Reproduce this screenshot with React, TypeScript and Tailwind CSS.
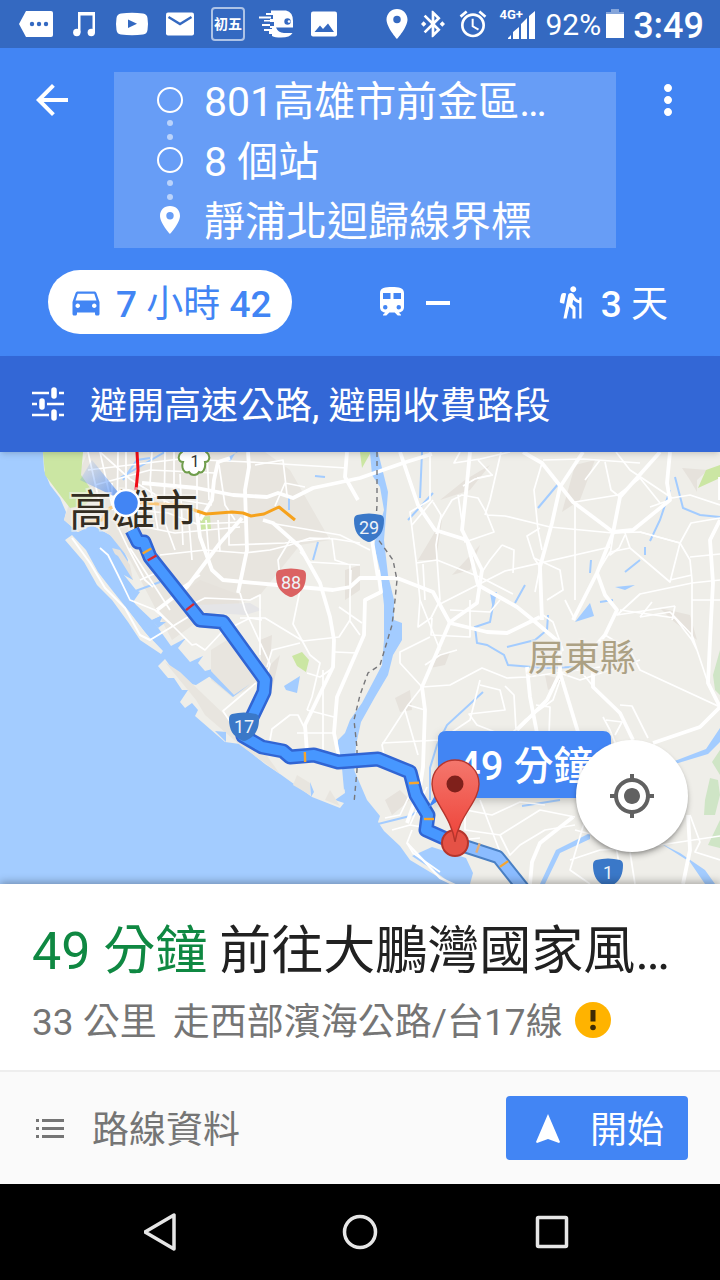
import type { ReactNode } from 'react';
import { MdAlarm, MdArrowBack, MdBluetoothConnected, MdDirectionsCar, MdHiking, MdMoreVert, MdMyLocation, MdPlace } from 'react-icons/md';

const WIDE_ROADS = [
    'M142 483L197 488L233 495L267 497L278 493L293 498L313 488L360 478L403 463L432 454',
    'M248 452L249 467L245 490L247 550L238 593',
    'M230 458L218 462L214 480L212 500L200 520',
    'M197 513L200 537L212 570L223 580L277 585L333 590L350 587L360 578L397 578L433 592L450 623L487 632L507 633L540 617',
    'M242 518L220 543L187 587L157 610',
    'M263 520L273 523L300 547L320 583L330 617L334 640L333 667L305 725L307 752',
    'M347 452L345 477L358 500',
    'M378 570L381 592L365 600L364 635L337 697L334 733L339 758',
    'M372 540L378 578',
    'M400 452L418 505L435 530L467 540L478 585L517 607L533 620L560 643L560 673L547 700L517 730',
    'M470 452L467 483L462 530L467 540L482 570L477 603L450 622L422 687L425 710L423 767L420 787L407 823',
    'M583 452L560 487L552 523L540 567L542 620',
    'M660 452L620 497L613 533L597 573L573 620',
    'M523 452L542 463L573 502L613 532L633 530L670 500L667 483L670 452',
    'M597 573L605 595L617 610L605 635L577 667',
    'M720 520L710 540L713 583L711 620L708 683L720 707L700 727L653 743',
    'M560 673L578 732',
    'M593 667L593 687L620 713L633 740',
    'M527 667L530 697L537 733',
    'M573 817L540 843L532 862L530 884',
    'M683 884L690 850L688 815',
    'M720 477L720 500',
];

const THIN_ROADS = [
    'M88 452L100 505M100 452L113 510M118 452L117 520M152 452L150 484L158 530M165 452L164 520L175 550M180 474L183 545M197 474L197 515',
    'M88 470L180 459L250 462L347 468M95 485L150 470L215 473M105 497L158 496L212 505M120 509L168 513L197 524L245 522M120 522L175 533L240 527',
    'M126 452L126 505M174 452L174 500M207 452L209 500M188 509L192 560M206 520L210 568M218 520L220 552M229 512L229 545L285 543L330 538',
    'M130 548L170 610M117 525L128 548L145 580L153 587M100 548L108 555L118 575L130 600L155 610L173 626',
    'M140 580L156 573L178 590L200 575M157 610L172 625L192 645L196 644L205 650L222 632L250 618L262 620',
    'M160 555L205 550L244 553L270 550L290 545L310 538L335 539L360 543',
    'M175 600L195 603L205 598L250 600L260 595L260 655M240 593L245 610L270 664L266 680',
    'M270 523L340 535L370 550M290 540L278 560L280 578M300 590L293 624L310 655L320 663L312 697L307 710',
    'M240 618L265 618L303 641L339 637L350 620L350 595L351 570M335 652L357 653M350 621L360 635M339 607L362 623',
    'M267 667L272 650L300 643M256 683L223 711L235 729M307 673L320 677L333 668M323 670L323 750M307 710L334 717M297 733L334 733',
    'M270 740L272 729L290 715L298 715L305 729M246 737L265 753L295 757M332 538L335 560L350 565L350 587M300 552L310 562L360 565',
    'M112 483L112 500M275 506L285 483L305 487M219 465L225 505L235 520M255 465L283 460L287 495M100 452L130 479L172 505',
    'M430 452L430 500L410 512L416 560L420 600L440 650M433 502L441 515L436 545L440 600M433 500L412 525M460 452L454 463L480 459L510 452',
    'M436 534L440 520L452 500L462 495L478 498L486 512L494 532L465 542L458 495M477 478L492 475L478 460M487 515L505 516L550 527L613 533L640 532L680 543L690 560L692 580L692 640',
    'M485 515L490 500L501 452M463 486L475 479L493 475M542 463L534 490L538 530L542 550M543 460L583 459L640 463M575 502L575 600M575 502L618 495L640 478L660 503M605 462L611 490L620 497M600 460L585 480',
    'M616 452L630 470L672 498L690 495L720 505M650 507L670 500M640 532L680 543L691 523L720 518M540 528L527 536L534 558L560 570L563 590L547 600M597 573L610 552L630 548L625 533',
    'M613 536L610 555L619 548L625 535M630 548L670 582L680 543M670 580L692 575M690 557L720 554M692 600L720 600M692 583L640 594L617 615L675 606',
    'M416 563L437 560L482 578L513 594M423 564L425 600M440 604L505 571L610 547M502 545L514 550L513 573M502 545L490 560L482 572M535 592L540 567L534 558',
    'M420 600L418 627L431 618L440 600M432 618L431 635L470 637L470 600M430 637L400 652L400 663L422 687L450 685L482 668L507 678L527 677L600 667',
    'M450 610L490 612L500 600M457 650L440 655L425 665M422 687L408 705L382 745L384 755M408 705L425 710M405 710L418 755M382 743L440 740L470 720L480 680',
    'M480 685L500 690L505 710L469 714L477 725L503 735M505 686L514 695L516 730M560 673L580 680L640 660M536 705L550 707L549 735M510 735L525 720L553 700L560 680',
    'M577 667L588 680L596 690M605 635L630 650L640 670L720 707M620 610L675 618L692 640L697 650M640 617L670 612L692 635L708 683M675 606L672 620',
    'M600 660L615 650M606 720L622 722L615 735M620 705L632 706L648 738M620 755L610 730L603 717M692 583L720 580M652 602L640 617M565 600L575 620M543 615L553 622L563 650L540 665',
    'M427 787L410 825L392 830M385 818L400 815L412 790M410 825L440 830L460 840L480 838M412 830L407 843L413 853L440 872M465 790L465 830L500 835L540 810L575 817',
    'M466 810L492 815L520 802L545 805M500 835L510 855L520 845L545 830L575 825M480 800L500 852M575 830L615 840L620 870M585 820L570 870L590 884M570 860L600 850L640 848L720 836M690 815L700 842L695 852L720 860M630 852L635 884',
];

const RIVERS = [
    'M422 452L420 498M433 493L408 520M559 483L538 508M675 477L683 508L700 515L720 517',
    'M670 490L660 520L650 541M645 547L645 555M640 560L625 572M591 560L590 573M525 585L515 603M600 602L613 600',
    'M494 600L490 622L475 627L477 643L487 645L504 655L508 665L545 668L575 667M507 647L535 640L547 630L548 615',
    'M483 692L447 725L437 745L430 768L430 800M123 480L137 460L150 458M165 452L120 478M160 582L130 593M318 542L313 560M289 498L289 510M315 476L325 477',
    'M522 806L560 800M378 824L410 816L430 803',
];

// [x, y] of the tick on the route, its rotation and its colour
const TICKS: [number, number, number, string][] = [
    [147, 551, -30, '#f5a52f'],
    [152, 558, -30, '#d9282f'],
    [190, 607, -38, '#d9282f'],
    [305, 757, 88, '#f5a52f'],
    [414, 783, -3, '#f5a52f'],
    [429, 819, 0, '#f5a52f'],
    [478, 848, -70, '#e3ad78'],
    [504, 864, -35, '#f5a52f'],
];

const STOPS = ['801高雄市前金區…', '8 個站', '靜浦北迴歸線界標'];

const Shield = ({ x, y, label, fill }: { x: number; y: number; label: string; fill: string }) => (
    <g transform={`translate(${x} ${y})`}>
        <path d="M-12 -13Q0 -16 12 -13Q15 -12 15 -8C15 3 11 9 3 13Q0 15 -3 13C-11 9 -15 3 -15 -8Q-15 -12 -12 -13Z" fill={fill} />
        <text y="6" textAnchor="middle" fill="#eef3f8" className="text-lg">{label}</text>
    </g>
);

const RouteMap = () => (
    <svg viewBox="0 452 720 432" preserveAspectRatio="xMidYMid slice" className="absolute inset-0 w-full h-full" role="img" aria-label="路線地圖">
        <defs>
            <linearGradient id="pin" x1="0" y1="0" x2="0" y2="1">
                <stop offset="0" stopColor="#f4776d" />
                <stop offset="1" stopColor="#ee4238" />
            </linearGradient>
            <linearGradient id="beam" x1="1" y1="1" x2="0" y2="0">
                <stop offset="0" stopColor="#4285f4" stopOpacity="0.8" />
                <stop offset="1" stopColor="#4285f4" stopOpacity="0" />
            </linearGradient>
            <filter id="soft" x="-20%" y="-20%" width="140%" height="150%">
                <feDropShadow dx="0" dy="3" stdDeviation="4" floodOpacity="0.2" />
            </filter>
        </defs>

        {/* land */}
        <rect y="452" width="720" height="432" fill="#a3ccff" />
        <path d="M43 452L44 470L50 485L60 498L66 512L64 520L78 532L92 525L110 535L121 545L128 560L124 575L136 590L140 592L133 602L152 620L163 615L154 622L171 646L186 638L178 648L190 662L203 656L198 663L205 671L216 668L212 675L196 685L182 682L165 659L158 666L168 678L174 678L182 690L188 690L180 702L185 708L192 703L198 710L195 716L225 742L240 744L265 764L280 774L312 797L340 808L344 803L335 800L345 793L343 768L343 735L354 735L354 770L361 786L367 800L380 816L378 822L384 831L400 846L410 860L440 878L450 884H720V452Z" fill="#efeee9" />
        <path d="M65 540L72 535L86 550L98 572L112 590L128 610L145 632L163 651L161 654L140 640L128 622L112 600L97 585L84 562Z" fill="#efeee9" />
        <path d="M88 452H265L290 470L330 540L300 545L260 595L200 620L172 640L130 560L110 535L92 525L78 532L64 520L80 470Z M211 650L235 635L260 675L256 685L232 697L211 680Z M165 662L180 672L230 720L265 753L280 774L240 745L205 715L196 700Z M297 775L310 783V795L293 785Z M330 790L340 806L325 800Z" fill="#e8e5df" />
        <path d="M100 545L120 550L130 565L133 580L125 575L112 548ZM180 594L200 580L240 595L238 610L200 612ZM260 640L272 635L270 665L280 655L272 690L262 675ZM490 465L470 490L440 500L465 480ZM575 465L595 460L580 500L562 512ZM682 468L708 470L697 480L697 492L690 480ZM418 560L442 520L436 560ZM480 545L470 570L452 575ZM434 655L450 652L445 665L430 668ZM395 698L410 690L412 710L400 712ZM660 608L690 615L697 640L672 620ZM345 570L360 565V590L345 600ZM545 675L565 680L548 690ZM385 800L400 790L410 800L392 815Z" fill="#e6e2dc" />
        <path d="M195 605L250 603L262 610L245 615L200 612Z" fill="#e5e5e7" />
        <path d="M43 452H83L81 475L95 495L85 505L70 508L60 495L45 475Z" fill="#cbe6a3" />
        <path d="M200 517L210 516L211 529L201 530ZM292 656L302 652L309 660L306 672L297 666ZM360 452H371L362 468ZM706 470L720 465V478L698 488Z" fill="#cbe6a3" />
        <path d="M720 650L713 675L715 690L720 695ZM720 750L712 762L720 775ZM710 778L718 780L720 795L715 815L704 815L705 800ZM720 820L708 845L720 848Z" fill="#cfe5c6" />

        {/* harbour, ponds and rivers */}
        <path d="M100 545L118 556L133 580L124 575ZM95 552L110 560L135 595L125 593ZM133 600L138 610L160 645L150 638L130 612ZM152 620L163 615L160 622L166 622L158 628ZM205 673L233 697L250 684L234 695L210 670ZM215 731L226 732V742ZM310 782L314 792L311 797ZM284 686L300 676L297 693L286 690ZM226 458L238 452H236L230 462ZM575 622L590 603L594 616ZM615 587L635 585L625 590ZM490 593L497 592L493 610Z" fill="#a3ccff" />
        <path d="M370 452H378L388 492L384 540L388 575L394 600V620L402 623V640L393 655L388 675L375 697L361 722L356 745L354 775L344 790L342 768L338 758V740L345 733L350 720L362 703L382 665L384 640V605L380 570L374 545L384 510L380 487L372 475Z" fill="#a3ccff" />
        <path d="M412 856L432 847L466 858L473 873L470 884H452L430 868ZM672 762L706 749L720 728V742L708 754L675 764ZM540 884L556 850L590 833V839L560 853L545 884ZM660 843L680 853L705 870L715 884H705L690 862Z" fill="#a3ccff" />
        <g fill="none" stroke="#a3ccff" strokeWidth="2">
            {RIVERS.map((d) => <path key={d} d={d} />)}
        </g>

        <g fill="none" stroke="#ffffff" strokeLinejoin="round">
            {THIN_ROADS.map((d) => <path key={d} d={d} strokeWidth="1.7" />)}
            {WIDE_ROADS.map((d) => <path key={d} d={d} strokeWidth="3.8" />)}
            <path d="M72 538L90 563L105 588L125 608L140 635L150 640L188 617" strokeWidth="2" />
            <path d="M407 843L440 878L470 892" strokeWidth="2.4" />
        </g>
        <path d="M377 452V505L375 535L393 560L397 580L395 600L392 625L380 665L368 673L360 695L354 720L357 748V770L354 803" fill="none" stroke="#77777a" strokeWidth="1.4" strokeDasharray="5 4" />

        {/* traffic */}
        <g fill="none" strokeLinejoin="round">
            <path d="M137 452L138 470L136 490" stroke="#f00d18" strokeWidth="3" />
            <path d="M85 522L102 520L110 508L126 502" stroke="#f8cf8b" strokeWidth="3" />
            <path d="M130 502L158 504L180 505L197 511" stroke="#fac779" strokeWidth="3" />
            <path d="M197 511L206 514L232 512L243 513L251 516L264 514L279 507L295 520" stroke="#f6a21c" strokeWidth="3" />
        </g>

        <path d="M126 502L80 480L92 460Z" fill="url(#beam)" />
        <text x="69" y="526" fill="#332d22" stroke="#f7f5f0" strokeWidth="4" strokeOpacity="0.6" paintOrder="stroke" className="text-[43px]">高雄市</text>
        <text x="528" y="671" fill="#aca184" stroke="#f3f1ec" strokeWidth="4" strokeOpacity="0.6" paintOrder="stroke" className="text-4xl">屏東縣</text>

        {/* route */}
        <g fill="none" strokeLinejoin="round">
            <path d="M455 843L498 857L526 892" stroke="#4a80c4" strokeWidth="14" />
            <path d="M455 843L498 857L526 892" stroke="#8bbcff" strokeWidth="10" />
            <path d="M132 530L138 542L144 542L150 557L200 620L223 622L265 680L264 692L243 736L262 747L283 751L290 757L314 755L338 762L378 759L410 772L416 795L428 815L426 830L455 843" stroke="#3165d3" strokeWidth="15" />
            <path d="M132 530L138 542L144 542L150 557L200 620L223 622L265 680L264 692L243 736L262 747L283 751L290 757L314 755L338 762L378 759L410 772L416 795L428 815L426 830L455 843" stroke="#4797ff" strokeWidth="10" />
        </g>
        {TICKS.map(([x, y, angle, color]) => (
            <path key={`${x}-${y}`} d="M-5 0H5" stroke={color} strokeWidth="2.4" transform={`translate(${x} ${y}) rotate(${angle})`} />
        ))}
        <circle cx="126" cy="503" r="13" fill="#4285f4" stroke="#ffffff" strokeWidth="2.4" />

        <path d="M194 446c4-6 13-3 12 4c5 3 4 10-1 10c1 6-2 12-6 10c-2 4-8 4-10 0c-5 2-8-4-6-10c-5 0-6-7-1-10c-1-7 8-10 12-4z" transform="translate(0 2)" fill="#ffffff" stroke="#6f9d4b" strokeWidth="2" />
        <text x="195" y="467" textAnchor="middle" fill="#333333" className="text-base">1</text>
        <Shield x={369} y={528} label="29" fill="#3a78c8" />
        <Shield x={291} y={583} label="88" fill="#db6262" />
        <Shield x={244} y={727} label="17" fill="#3a78c8" />
        <Shield x={608} y={873} label="1" fill="#3a78c8" />

        {/* callout and destination */}
        <path d="M446 731H603Q611 731 611 739V790Q611 798 603 798H442L428 808L438 790V739Q438 731 446 731Z" fill="#4285f4" filter="url(#soft)" />
        <text x="458" y="780" fill="#ffffff" className="text-[40px] font-medium">49 分鐘</text>
        <circle cx="455" cy="843" r="13" fill="#e55246" stroke="#b5352c" strokeWidth="2" />
        <path d="M455 760C442 760 432 771 432 784C432 802 451 815 455 842C459 815 479 802 479 784C479 771 469 760 455 760Z" fill="url(#pin)" stroke="#b5352c" strokeWidth="1.4" />
        <circle cx="455" cy="784" r="8.5" fill="#7f201b" />
    </svg>
);

const StatusIcon = ({ children }: { children: ReactNode }) => (
    <svg viewBox="0 0 48 48" className="w-12 h-12" fill="#ffffff" aria-hidden="true">{children}</svg>
);

const StatusBar = () => (
    <div className="h-12 bg-[#3469c1] text-white flex justify-between items-center pl-3 pr-4">
        <div className="flex items-center">
            <StatusIcon>
                <path d="M14 11H39Q41 11 41 13V35Q41 37 39 37H14L7 24Z" />
                <g fill="#3469c1"><circle cx="20" cy="24" r="2.2" /><circle cx="27" cy="24" r="2.2" /><circle cx="34" cy="24" r="2.2" /></g>
            </StatusIcon>
            <StatusIcon>
                <path d="M18 12H35V32.500H32.500V15.500H20.500V32.500H18Z" />
                <circle cx="16.800" cy="32.500" r="3.700" /><circle cx="31.300" cy="32.500" r="3.700" />
            </StatusIcon>
            <StatusIcon>
                <path d="M13 13.500Q24 12 35 13.500Q39 14 39.500 18Q40.500 24 39.500 30Q39 34 35 34.500Q24 36 13 34.500Q9 34 8.500 30Q7.500 24 8.500 18Q9 14 13 13.500Z" />
                <path d="M20 19.500V28L29 23.700Z" fill="#3469c1" />
            </StatusIcon>
            <StatusIcon>
                <rect x="10" y="12.500" width="28" height="23" rx="2" />
                <path d="M12.500 17L24 24L35.500 17" fill="none" stroke="#3469c1" strokeWidth="2.400" />
            </StatusIcon>
            <div className="w-12 flex justify-center">
                <span className="w-[34px] h-[34px] border-2 border-white/60 rounded-sm flex justify-center items-center text-[14px] leading-none font-bold">初五</span>
            </div>
            <StatusIcon>
                <path d="M19 10.500H34Q41 12 41 21V27.500H24Q26 32.500 32 33H40.500Q38 37.500 29 37.500Q23 37.500 20 36V34H17V31H20V28H18V26H22V22H18V19H21V15H14V13H19Z" />
                <path d="M7 16.500H19V18.500H7ZM12 20H19V21.500H12ZM10 24H18V26H10ZM12 29H20V31H12Z" />
                <circle cx="35.500" cy="21.500" r="3.200" fill="#3469c1" /><circle cx="37" cy="21.500" r="1.300" />
            </StatusIcon>
            <StatusIcon>
                <rect x="11" y="11.500" width="26" height="25" rx="2" />
                <path d="M14.500 32L20 25.500L23 29L28 23.500L34 32Z" fill="#3469c1" />
            </StatusIcon>
        </div>
        <div className="flex items-center">
            <MdPlace className="w-9 h-9" />
            <MdBluetoothConnected className="w-8 h-8 ml-0.5" />
            <MdAlarm className="w-8 h-8 ml-2" />
            <div className="w-12 h-12 relative">
                <span className="absolute left-2.5 top-2 text-[13px] leading-none font-bold">4G+</span>
                <svg viewBox="0 0 48 48" className="w-12 h-12" fill="#ffffff" aria-hidden="true">
                    <path d="M19 39V38L22 35V39ZM24 39V32L30 27V39ZM32 39V24L38 18V39ZM40 39V16L46 11V39Z" />
                </svg>
            </div>
            <span className="ml-2 pt-0.5 text-[30px] leading-none">92%</span>
            <svg viewBox="0 0 20 30" className="w-5 h-[30px] ml-1 mr-2" fill="#ffffff" aria-hidden="true">
                <path d="M6 0H14V3H19V6H1V3H6Z" fillOpacity="0.4" />
                <path d="M1 5H19V29H1Z" />
            </svg>
            <span className="pt-1 text-4xl leading-none font-medium">3:49</span>
        </div>
    </div>
);

const Header = () => (
    <header className="bg-[#4285f4] text-white">
        <div className="pt-6 px-7 flex justify-between items-start">
            <button type="button" aria-label="返回" className="w-12 h-14 flex justify-center items-center">
                <MdArrowBack className="w-12 h-12" />
            </button>
            <div className="grow ml-[38px] mr-7 h-44 bg-white/20 pl-8 flex gap-3">
                <svg viewBox="0 0 48 176" className="w-12 h-44 shrink-0" fill="none" aria-hidden="true">
                    <circle cx="24" cy="28" r="12" stroke="#ffffff" strokeWidth="2" />
                    <circle cx="24" cy="88" r="12" stroke="#ffffff" strokeWidth="2" />
                    <g fill="#ffffff" fillOpacity="0.55">
                        <circle cx="24" cy="51" r="3" /><circle cx="24" cy="65" r="3" />
                        <circle cx="24" cy="111" r="3" /><circle cx="24" cy="125" r="3" />
                    </g>
                    <path d="M24 134C18 134 14 138 14 144C14 151 24 162 24 162S34 151 34 144C34 138 30 134 24 134ZM24 140A3.700 3.700 0 1 1 24 147.400A3.700 3.700 0 1 1 24 140Z" fill="#ffffff" fillRule="evenodd" />
                </svg>
                <ul className="-my-0.5 -ml-0.5">
                    {STOPS.map((stop) => (
                        <li key={stop} className="h-15 pt-1 flex items-center text-[41px] leading-none whitespace-nowrap">{stop}</li>
                    ))}
                </ul>
            </div>
            <button type="button" aria-label="更多選項" className="w-12 h-14 flex justify-center items-center">
                <MdMoreVert className="w-12 h-12" />
            </button>
        </div>
        <nav className="pt-[22px] pb-[22px] pl-12 pr-8 flex justify-between text-[37px] leading-none font-medium">
            <button type="button" className="h-16 px-5 rounded-full bg-white text-[#4285f4] flex items-center gap-3">
                <MdDirectionsCar className="w-9 h-9" />
                <span className="pt-1">7 <span className="font-normal">小時</span> 42</span>
            </button>
            <button type="button" aria-label="大眾運輸" className="h-16 px-5 flex items-center gap-4">
                <svg viewBox="0 0 24 24" className="w-9 h-9" fill="currentColor" aria-hidden="true">
                    <path d="M12 2c-4.420 0-8 .5-8 4v9.500C4 17.430 5.570 19 7.500 19L6 20.500v.5h2.230l2-2H13.800l2 2H18v-.5L16.500 19c1.930 0 3.500-1.570 3.500-3.500V6c0-3.500-3.580-4-8-4zM7.500 17a1.500 1.500 0 1 1 0-3a1.500 1.500 0 0 1 0 3zM11 10H6V6h5v4zM16.500 17a1.500 1.500 0 1 1 0-3a1.500 1.500 0 0 1 0 3zM18 10h-5V6h5v4z" />
                </svg>
                <span className="w-6 h-1 mt-0.5 bg-white" />
            </button>
            <button type="button" className="h-16 px-5 flex items-center gap-3">
                <MdHiking className="w-9 h-9" />
                <span className="pt-1">3 <span className="font-normal">天</span></span>
            </button>
        </nav>
    </header>
);

const RouteOptions = () => (
    <button type="button" className="relative z-10 w-full h-24 px-8 bg-[#3367d6] text-white flex items-center gap-[26px] shadow-md">
        <svg viewBox="0 0 32 34" className="w-8 h-[34px] shrink-0" stroke="#ffffff" fill="none" aria-hidden="true">
            <path d="M0 6H17M27 6H32M0 17H5M15 17H32M0 28H17M27 28H32" strokeWidth="2.600" />
            <path d="M22 3V9M10 14V20M22 25V31" strokeWidth="5.500" strokeLinecap="round" />
        </svg>
        <span className="pt-1 text-[37px] leading-none whitespace-nowrap">避開高速公路, 避開收費路段</span>
    </button>
);

const TripSheet = () => (
    <section className="relative bg-white shadow-[0_-2px_8px_rgba(0,0,0,0.3)]">
        <div className="pt-9 pb-[26px] px-8">
            <h1 className="h-16 flex items-center gap-3 text-[52px] leading-none text-[#212121] whitespace-nowrap">
                <span className="text-[#0f8842]">49 分鐘</span>
                <span>前往大鵬灣國家風…</span>
            </h1>
            <div className="mt-3 h-12 flex items-center gap-4 text-[37px] leading-none text-[#757575] whitespace-nowrap">
                <span className="pt-1">33 公里</span>
                <span className="pt-1">走西部濱海公路/台17線</span>
                <svg viewBox="0 0 36 36" className="w-9 h-9 -ml-1" role="img" aria-label="注意">
                    <circle cx="18" cy="18" r="18" fill="#ffb300" />
                    <path d="M15.500 8H20.500V19.500H15.500Z" fill="#3e2b05" />
                    <circle cx="18" cy="25.500" r="2.800" fill="#3e2b05" />
                </svg>
            </div>
        </div>
        <div className="h-[114px] px-8 bg-[#fafafa] border-t-2 border-[#eeeeee] flex justify-between items-center text-[37px] leading-none">
            <button type="button" className="h-16 flex items-center gap-6 text-[#757575]">
                <svg viewBox="0 0 36 36" className="w-9 h-9" fill="currentColor" aria-hidden="true">
                    <path d="M4 9H7V12H4ZM10 9H32V12H10ZM4 17H7V20H4ZM10 17H32V20H10ZM4 25H7V28H4ZM10 25H32V28H10Z" />
                </svg>
                <span className="pt-1">路線資料</span>
            </button>
            <button type="button" className="h-16 px-6 rounded bg-[#4285f4] text-white flex items-center gap-6">
                <svg viewBox="0 0 36 36" className="w-9 h-9" fill="currentColor" aria-hidden="true">
                    <path d="M18 4L30 32L29 33L18 29L7 33L6 32Z" />
                </svg>
                <span className="pt-1">開始</span>
            </button>
        </div>
    </section>
);

const NavigationBar = () => (
    <nav className="h-24 bg-black px-[72px] grid grid-cols-3 justify-items-center items-center">
        <button type="button" aria-label="上一頁" className="w-12 h-12">
            <svg viewBox="0 0 48 48" fill="none" stroke="#e6e6e6" strokeWidth="3.500" strokeLinejoin="round">
                <path d="M30 7V41L1 24Z" />
            </svg>
        </button>
        <button type="button" aria-label="主畫面" className="w-12 h-12">
            <svg viewBox="0 0 48 48" fill="none" stroke="#e6e6e6" strokeWidth="3.500">
                <circle cx="24" cy="24" r="15.500" />
            </svg>
        </button>
        <button type="button" aria-label="最近使用" className="w-12 h-12">
            <svg viewBox="0 0 48 48" fill="none" stroke="#e6e6e6" strokeWidth="3.500">
                <rect x="9.500" y="9.500" width="29" height="29" rx="1" />
            </svg>
        </button>
    </nav>
);

const App = () => {
    return (
        <div className="min-h-screen flex flex-col bg-white font-['Roboto','Noto_Sans_CJK_TC',sans-serif]">
            <StatusBar />
            <Header />
            <RouteOptions />
            <main className="relative grow min-h-80 overflow-hidden">
                <RouteMap />
                <button type="button" aria-label="我的位置" className="absolute right-8 bottom-8 w-28 h-28 rounded-full bg-white text-[#616161] shadow-md shadow-black/30 flex justify-center items-center">
                    <MdMyLocation className="w-12 h-12" />
                </button>
            </main>
            <TripSheet />
            <NavigationBar />
        </div>
    );
};

export default App;
